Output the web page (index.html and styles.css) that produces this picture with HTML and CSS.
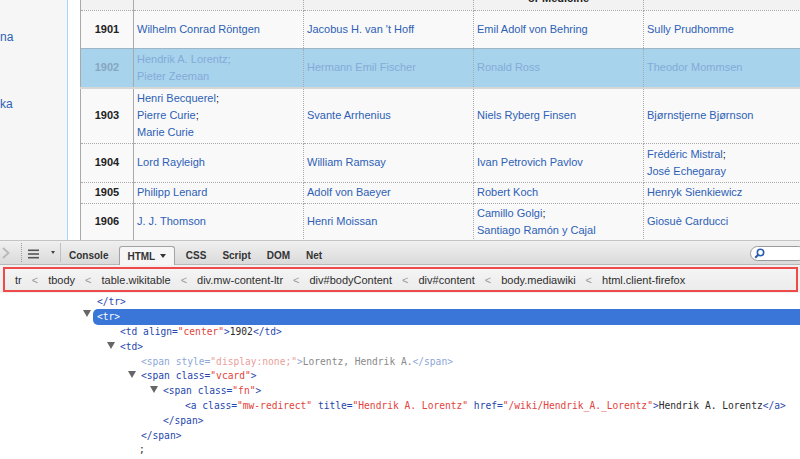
FILE: index.html
```html
<!DOCTYPE html>
<html>
<head>
<meta charset="utf-8">
<link rel="stylesheet" href="styles.css">
</head>
<body>
<div class="page">
  <aside class="sidebar">
    <a class="side-link">na</a>
    <a class="side-link">ka</a>
  </aside>
  <main class="content">
    <table class="wikitable">
      <colgroup>
        <col class="c-year"><col class="c-name"><col class="c-name"><col class="c-name"><col class="c-last">
      </colgroup>
      <tr class="r-head">
        <th class="year"></th><th></th><th></th><th>or Medicine</th><th></th>
      </tr>
      <tr class="r1901">
        <td class="year">1901</td>
        <td><a>Wilhelm Conrad Röntgen</a></td>
        <td><a>Jacobus H. van 't Hoff</a></td>
        <td><a>Emil Adolf von Behring</a></td>
        <td><a>Sully Prudhomme</a></td>
      </tr>
      <tr class="r1902 hl">
        <td class="year">1902</td>
        <td><a>Hendrik A. Lorentz</a>;<br><a>Pieter Zeeman</a></td>
        <td><a>Hermann Emil Fischer</a></td>
        <td><a>Ronald Ross</a></td>
        <td><a>Theodor Mommsen</a></td>
      </tr>
      <tr class="r1903">
        <td class="year">1903</td>
        <td><a>Henri Becquerel</a>;<br><a>Pierre Curie</a>;<br><a>Marie Curie</a></td>
        <td><a>Svante Arrhenius</a></td>
        <td><a>Niels Ryberg Finsen</a></td>
        <td><a>Bjørnstjerne Bjørnson</a></td>
      </tr>
      <tr class="r1904">
        <td class="year">1904</td>
        <td><a>Lord Rayleigh</a></td>
        <td><a>William Ramsay</a></td>
        <td><a>Ivan Petrovich Pavlov</a></td>
        <td><a>Frédéric Mistral</a>;<br><a>José Echegaray</a></td>
      </tr>
      <tr class="r1905">
        <td class="year">1905</td>
        <td><a>Philipp Lenard</a></td>
        <td><a>Adolf von Baeyer</a></td>
        <td><a>Robert Koch</a></td>
        <td><a>Henryk Sienkiewicz</a></td>
      </tr>
      <tr class="r1906">
        <td class="year">1906</td>
        <td><a>J. J. Thomson</a></td>
        <td><a>Henri Moissan</a></td>
        <td><a>Camillo Golgi</a>;<br><a>Santiago Ramón y Cajal</a></td>
        <td><a>Giosuè Carducci</a></td>
      </tr>
    </table>
  </main>
</div>

<section class="devtools">
  <div class="toolbar">
    <svg class="ico chevron" width="10" height="14" viewBox="0 0 10 14"><path d="M2 2 L7.5 7 L2 12" fill="none" stroke="#b8b8b8" stroke-width="1.8"/></svg>
    <span class="sep dotted"></span>
    <svg class="ico menu" width="11" height="10" viewBox="0 0 11 10"><rect x="0" y="0.5" width="11" height="1.6" fill="#555"/><rect x="0" y="4.2" width="11" height="1.6" fill="#555"/><rect x="0" y="7.9" width="11" height="1.6" fill="#555"/></svg>
    <span class="drop"></span>
    <span class="sep solid"></span>
    <span class="tab">Console</span>
    <span class="tab active">HTML <span class="caret"></span></span>
    <span class="tab">CSS</span>
    <span class="tab">Script</span>
    <span class="tab">DOM</span>
    <span class="tab">Net</span>
    <span class="search">
      <svg width="11" height="11" viewBox="0 0 11 11"><circle cx="6.5" cy="4.5" r="3.2" fill="none" stroke="#2a5fb0" stroke-width="1.6"/><path d="M4.2 6.8 L1.2 9.8" stroke="#2a5fb0" stroke-width="2"/></svg>
    </span>
  </div>
  <div class="crumbs">
    <div class="crumb-box">
      <span class="crumb">tr</span><span class="lt">&lt;</span>
      <span class="crumb">tbody</span><span class="lt">&lt;</span>
      <span class="crumb">table.wikitable</span><span class="lt">&lt;</span>
      <span class="crumb">div.mw-content-ltr</span><span class="lt">&lt;</span>
      <span class="crumb">div#bodyContent</span><span class="lt">&lt;</span>
      <span class="crumb">div#content</span><span class="lt">&lt;</span>
      <span class="crumb">body.mediawiki</span><span class="lt">&lt;</span>
      <span class="crumb">html.client-firefox</span>
    </div>
  </div>
  <div class="code">
    <div class="line i1 first"><span class="t">&lt;/tr&gt;</span></div>
    <div class="line sel"><span class="tw"></span><span class="bar">&lt;tr&gt;</span></div>
    <div class="line i2"><span class="t">&lt;td </span><span class="a">align</span><span class="t">=</span><span class="v">"center"</span><span class="t">&gt;</span><span class="x">1902</span><span class="t">&lt;/td&gt;</span></div>
    <div class="line i2"><span class="tw"></span><span class="t">&lt;td&gt;</span></div>
    <div class="line i3 fade"><span class="t">&lt;span </span><span class="a">style</span><span class="t">=</span><span class="v">"display:none;"</span><span class="t">&gt;</span><span class="x">Lorentz, Hendrik A.</span><span class="t">&lt;/span&gt;</span></div>
    <div class="line i3"><span class="tw"></span><span class="t">&lt;span </span><span class="a">class</span><span class="t">=</span><span class="v">"vcard"</span><span class="t">&gt;</span></div>
    <div class="line i4"><span class="tw"></span><span class="t">&lt;span </span><span class="a">class</span><span class="t">=</span><span class="v">"fn"</span><span class="t">&gt;</span></div>
    <div class="line i5"><span class="t">&lt;a </span><span class="a">class</span><span class="t">=</span><span class="v">"mw-redirect"</span><span class="t"> </span><span class="a">title</span><span class="t">=</span><span class="v">"Hendrik A. Lorentz"</span><span class="t"> </span><span class="a">href</span><span class="t">=</span><span class="v">"/wiki/Hendrik_A._Lorentz"</span><span class="t">&gt;</span><span class="x">Hendrik A. Lorentz</span><span class="t">&lt;/a&gt;</span></div>
    <div class="line i4"><span class="t">&lt;/span&gt;</span></div>
    <div class="line i3"><span class="t">&lt;/span&gt;</span></div>
    <div class="line semi"><span class="x">;</span></div>
    <div class="line i3"><span class="t">&lt;td&gt;</span></div>
  </div>
</section>
</body>
</html>
```

FILE: styles.css
```css
* { box-sizing: border-box; }
html, body { margin: 0; padding: 0; }
body {
  width: 800px;
  height: 459px;
  overflow: hidden;
  background: #fff;
  font-family: "Liberation Sans", Arial, sans-serif;
}

/* ---------- wiki page ---------- */
.page {
  display: flex;
  height: 240px;
  overflow: hidden;
}
.sidebar {
  width: 68px;
  flex: none;
  background: #f6f6f6;
  border-right: 1px solid #a7d7f9;
  display: flex;
  flex-direction: column;
  padding-top: 30px;
  gap: 53px;
  font-size: 12px;
  line-height: 14px;
}
.side-link { color: #2d5fb6; }

.content {
  flex: 1;
  padding-left: 12px;
  overflow: hidden;
}
.wikitable {
  margin-top: -20px;
  border-collapse: collapse;
  table-layout: fixed;
  width: 740px;
  background: #f9f9f9;
  font-size: 11px;
  line-height: 17px;
  color: #222;
}
.c-year { width: 53px; }
.c-name { width: 170px; }
.c-last { width: 177px; }

.wikitable th,
.wikitable td {
  border: 1px dotted #a9a9a9;
  padding: 0 3px;
  vertical-align: middle;
  text-align: left;
  font-weight: normal;
  white-space: nowrap;
}
.wikitable th {
  background: #f2f2f2;
  font-weight: bold;
  text-align: center;
  vertical-align: bottom;
  padding-bottom: 3px;
  border-top: none;
}
.wikitable .year {
  text-align: center;
  font-weight: bold;
  border-left: 1px solid #a9a9a9;
  border-right: 1px solid #a9a9a9;
}
.wikitable a { color: #2d5fb6; }

.r-head { height: 30px; }
.r1901 { height: 38px; }
.r1902 { height: 40px; }
.r1903 { height: 55px; }
.r1904 { height: 39px; }
.r1905 { height: 21px; }
.r1906 { height: 37px; }

.r1903 td { border-top: 2px solid #d6d6d6; }

.hl td {
  background: #a7d3ec;
  color: #86a6c2;
  border-top: 1px solid #9cb6c6;
  border-bottom: 1px solid #9cb6c6;
}
.hl a { color: #85aad8; }

/* ---------- devtools ---------- */
.devtools {
  height: 219px;
  display: flex;
  flex-direction: column;
}
.toolbar {
  height: 25px;
  flex: none;
  border-top: 1px solid #c4c4c4;
  border-bottom: 1px solid #b8b8b8;
  background: linear-gradient(#f0f0f0, #dadada);
  display: flex;
  align-items: center;
  font: bold 10px "Liberation Sans", Arial, sans-serif;
  color: #333;
}
.chevron { margin-left: 1px; }
.sep {
  align-self: stretch;
  width: 0;
  margin: 2px 0;
}
.sep.dotted { border-left: 1px dotted #9a9a9a; margin-left: 10px; margin-right: 6px; }
.sep.solid { border-left: 1px solid #c0c0c0; margin-left: 3px; }
.menu { margin-top: 2px; }
.drop {
  width: 0;
  height: 0;
  border-left: 2.5px solid transparent;
  border-right: 2.5px solid transparent;
  border-top: 3px solid #444;
  margin-left: 12px;
  margin-right: 2px;
}
.tab {
  align-self: flex-end;
  height: 19px;
  padding: 2px 8px 0;
  line-height: 17px;
}
.tab.active {
  background: #f6f6f6;
  border: 1px solid #a3a3a3;
  border-bottom: none;
  border-radius: 3px 3px 0 0;
  margin: 0 3px -1px 3px;
  padding: 1px 8px 0 7px;
  height: 19px;
}
.caret {
  display: inline-block;
  width: 0;
  height: 0;
  border-left: 3.5px solid transparent;
  border-right: 3.5px solid transparent;
  border-top: 4px solid #333;
  margin-left: 2px;
  vertical-align: 2px;
}
.search {
  margin-left: auto;
  margin-right: -6px;
  width: 56px;
  height: 15px;
  background: #fff;
  border: 1px solid #9a9a9a;
  border-radius: 8px;
  display: flex;
  align-items: center;
  padding-left: 3px;
  margin-top: 1px;
}

.crumbs {
  height: 28px;
  flex: none;
  background: #f1f1f1;
  padding: 2px 2px 1px 3px;
}
.crumb-box {
  height: 100%;
  border: 2px solid #ee4a4a;
  background: linear-gradient(#f4f4f4, #ececec);
  display: flex;
  align-items: center;
  gap: 10px;
  padding-left: 10px;
  font-size: 11px;
  color: #2e2e2e;
}
.lt { color: #9a9a9a; }

.code {
  flex: 1;
  background: #fff;
  overflow: hidden;
  padding-top: 2px;
  font-family: "DejaVu Sans Mono", "Liberation Mono", monospace;
  font-size: 9.6px;
}
.line {
  height: 14.8px;
  line-height: 14.8px;
  white-space: pre;
}
.line.first { height: 14px; line-height: 14px; }
.i1 { padding-left: 97px; }
.i2 { padding-left: 120px; }
.i3 { padding-left: 141px; }
.i4 { padding-left: 163px; }
.i5 { padding-left: 185px; }
.semi { padding-left: 139px; }

.t, .a { color: #2646ad; }
.v { color: #e2433c; }
.x { color: #2b2b2b; }
.fade .t, .fade .a { color: #8ea6d8; }
.fade .v { color: #eaa09c; }
.fade .x { color: #8a8a8a; }

.tw {
  display: inline-block;
  width: 0;
  height: 0;
  border-left: 4px solid transparent;
  border-right: 4px solid transparent;
  border-top: 7px solid #666;
  margin-left: -13px;
  margin-right: 5px;
  vertical-align: 1px;
}
.line.sel {
  height: 16px;
  line-height: 16px;
  padding-left: 83px;
}
.line.sel .tw { margin-left: 0; margin-right: 2px; vertical-align: 3px; }
.bar {
  display: inline-block;
  width: calc(100% - 10px);
  height: 16px;
  vertical-align: top;
  background: #3a76d8;
  color: #fff;
  border-radius: 5px 0 0 5px;
  padding-left: 4px;
}
```
